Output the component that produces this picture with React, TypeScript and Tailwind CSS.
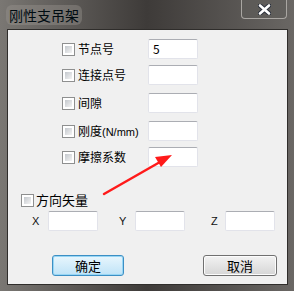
import React from "react";

const cjk = { fontFamily: '"Noto Sans CJK SC", "Liberation Sans", sans-serif' };

const CheckBox = () => (
  <div className="w-[13px] h-[13px] border border-[#8e8f8f] bg-white p-[2px] shrink-0">
    <div className="w-full h-full bg-gradient-to-br from-[#c4c8cd] to-[#f4f4f4]" />
  </div>
);

const TextBox = ({ value = "", w = "w-[50px]" }: { value?: string; w?: string }) => (
  <div
    className={`${w} h-[20px] bg-white border border-[#e2e3ea] border-t-[#abadb3] rounded-[2px] flex items-center px-[4px] text-[12px] text-black`}
    style={cjk}
  >
    {value}
  </div>
);

const rows = [
  { label: "节点号", value: "5", mt: "mt-0" },
  { label: "连接点号", value: "", mt: "mt-[6px]" },
  { label: "间隙", value: "", mt: "mt-[8px]" },
  { label: "刚度", extra: "(N/mm)", value: "", mt: "mt-[8px]" },
  { label: "摩擦系数", value: "", mt: "mt-[6px]" },
];

export default function App() {
  return (
    <div
      className="relative w-[294px] h-[291px] flex flex-col bg-gradient-to-r from-[#7a7773] via-[#3e3b39] to-[#6a6764] overflow-hidden"
      style={cjk}
    >
      {/* title bar */}
      <div className="h-[29px] flex items-start shrink-0">
        <div className="ml-[6px] mt-[5px] px-[3px] py-[2px] rounded-[6px] bg-[#9a9792]/40 text-[14px] leading-[16px] text-[#000c12]">
          刚性支吊架
        </div>
        <div className="ml-auto mr-[7px] w-[46px] h-[19px] border border-t-0 border-[#a9a6a2] rounded-b-[4px] bg-[#5e5b58]/60 flex items-center justify-center">
          <svg width="13" height="11" viewBox="0 0 13 11">
            <path d="M2 1.5 L11 9.5 M11 1.5 L2 9.5" stroke="#2a2f3a" strokeWidth="4.5" strokeLinecap="round" />
            <path d="M2 1.5 L11 9.5 M11 1.5 L2 9.5" stroke="#ffffff" strokeWidth="2.6" strokeLinecap="round" />
          </svg>
        </div>
      </div>

      {/* client area */}
      <div className="flex-1 ml-[7px] mr-[6px] mb-[6px] border border-[#2f2d2b] bg-[#f0f0f0] flex flex-col">
        <div className="flex flex-col pt-[9px] pl-[54px]">
          {rows.map((r) => (
            <div key={r.label} className={`flex items-center ${r.mt}`}>
              <CheckBox />
              <div className="w-[73px] pl-[3px] text-[12px] leading-[16px] text-black whitespace-nowrap">
                {r.label}
                {r.extra && (
                  <span className="text-[11px]" style={{ fontFamily: '"Liberation Sans", sans-serif' }}>
                    {r.extra}
                  </span>
                )}
              </div>
              <TextBox value={r.value} />
            </div>
          ))}
        </div>

        <div className="flex items-center pl-[13px] mt-[25px]">
          <CheckBox />
          <div className="pl-[2px] text-[13px] leading-[16px] text-black">方向矢量</div>
        </div>

        <div
          className="flex items-center pl-[24px] mt-[3px] text-[11px] text-[#111]"
          style={{ fontFamily: '"Liberation Sans", sans-serif' }}
        >
          <span className="w-[16px]">X</span>
          <TextBox />
          <span className="w-[37px] pl-[21px]">Y</span>
          <TextBox />
          <span className="w-[40px] pl-[26px]">Z</span>
          <TextBox />
        </div>

        <div className="flex items-center justify-between pl-[44px] pr-[10px] mt-[24px]">
          <button className="w-[72px] h-[21px] rounded-[3px] border border-[#3c8fc4] bg-gradient-to-b from-[#e8f6fd] to-[#bfe3f7] shadow-[inset_0_0_0_1px_#97d6f5] text-[13px] leading-[16px] text-black">
            确定
          </button>
          <button className="w-[74px] h-[21px] rounded-[3px] border border-[#707070] bg-gradient-to-b from-[#f2f2f2] to-[#d6d6d6] shadow-[inset_0_0_0_1px_#fcfcfc] text-[13px] leading-[16px] text-black">
            取消
          </button>
        </div>
      </div>

      {/* red annotation arrow */}
      <svg className="absolute left-0 top-0 pointer-events-none" width="294" height="291">
        <path d="M104 194 L160 162" stroke="#ff1a1a" strokeWidth="2.5" strokeLinecap="round" />
        <path d="M172 155 L155 157 L161 167 Z" fill="#ff1a1a" />
      </svg>
    </div>
  );
}
